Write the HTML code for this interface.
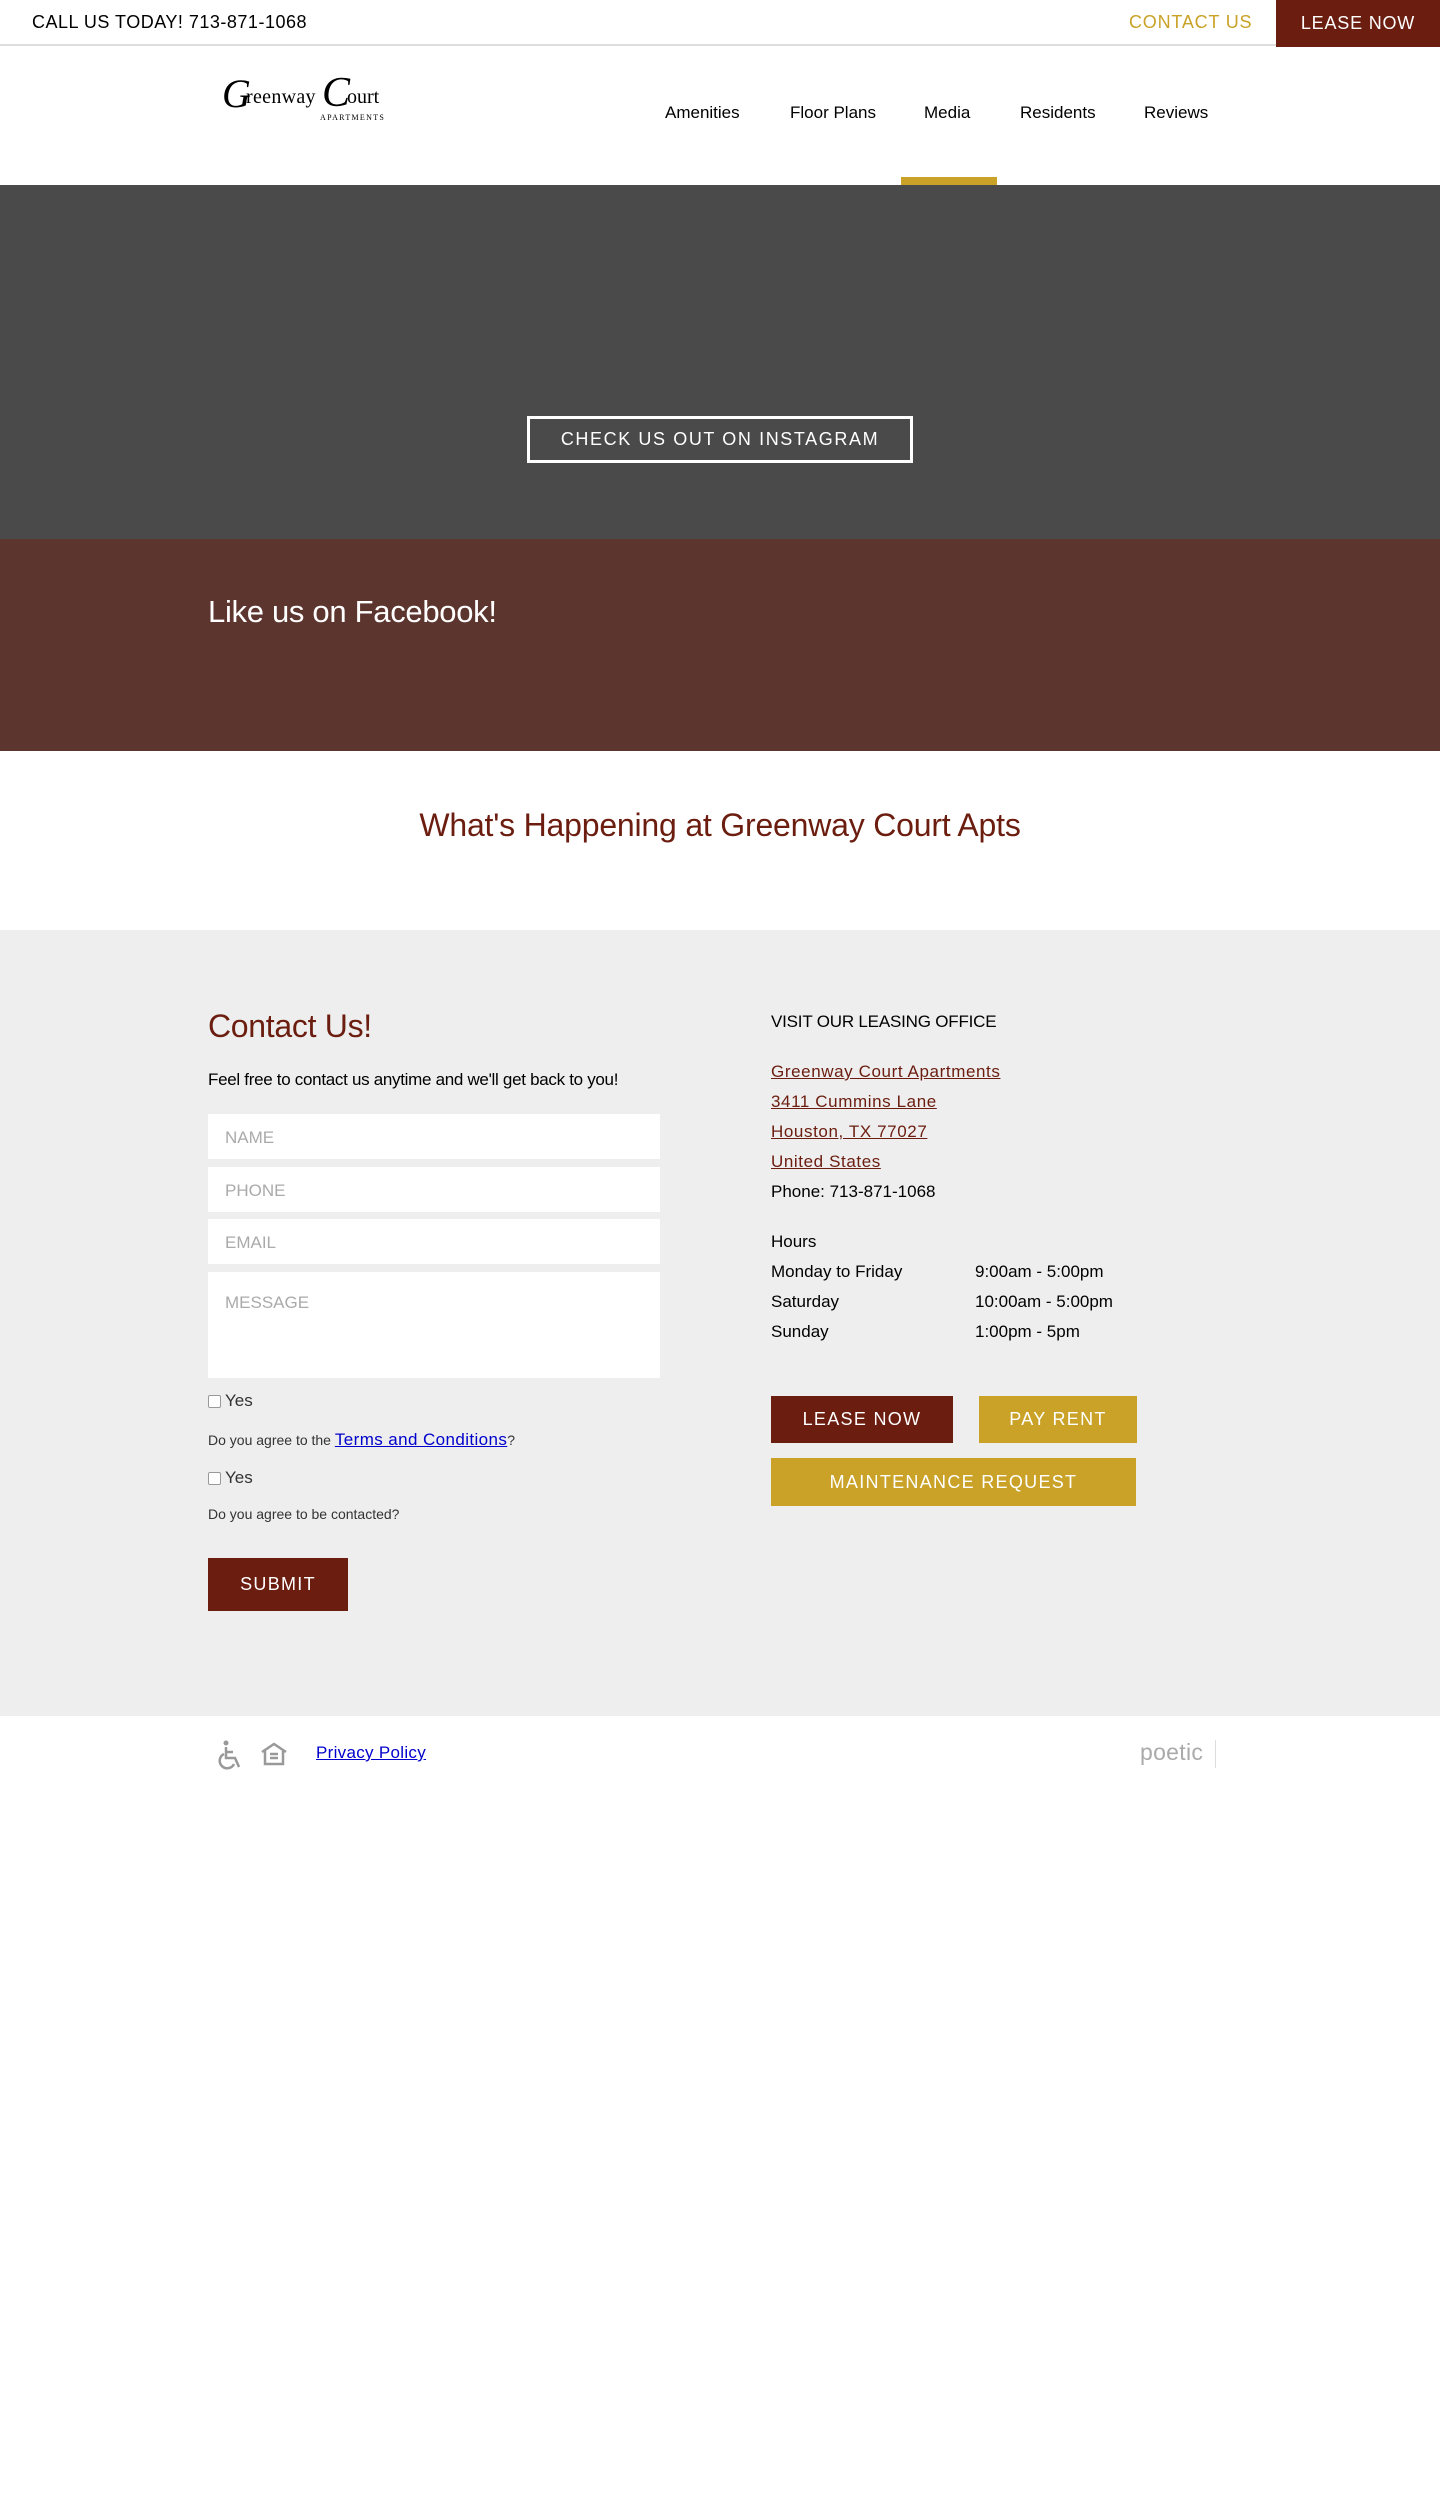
<!DOCTYPE html>
<html><head><meta charset="utf-8"><style>
*{margin:0;padding:0;box-sizing:border-box}
body{width:1440px;height:2500px;background:#fff;font-family:"Liberation Sans",sans-serif;color:#000;position:relative;overflow:hidden}
.a{position:absolute;white-space:nowrap}
.topbar{position:absolute;left:0;top:0;width:1440px;height:46px;border-bottom:2px solid #ddd}
.nav{font-size:17px;top:103px}
.inp{position:absolute;left:208px;width:452px;background:#fff;color:#aaa;font-size:17px;padding-left:17px}
.btn{position:absolute;color:#fff;font-size:18px;letter-spacing:1.3px;display:flex;align-items:center;justify-content:center}
.lk{color:#6b1d0f;text-decoration:underline;font-size:17px;letter-spacing:.6px}
.r{font-size:17px}
</style></head><body>
<div class="topbar"></div>
<div class="a" style="left:32px;top:12px;font-size:18px;letter-spacing:.5px">CALL US TODAY! 713-871-1068</div>
<div class="a" style="left:1129px;top:12px;font-size:18px;color:#c9a227;letter-spacing:.8px">CONTACT US</div>
<div class="a" style="left:1276px;top:0;width:164px;height:47px;background:#6b1d0f;color:#fff;font-size:18px;letter-spacing:.8px;display:flex;align-items:center;justify-content:center">LEASE NOW</div>

<div class="a" style="left:222px;top:74px;font-family:'Liberation Serif',serif;font-style:italic;font-size:40px;line-height:40px">G</div>
<div class="a" style="left:246px;top:86px;font-family:'Liberation Serif',serif;font-size:20px;letter-spacing:.3px">reenway</div>
<div class="a" style="left:322px;top:72px;font-family:'Liberation Serif',serif;font-style:italic;font-size:42px;line-height:42px">C</div>
<div class="a" style="left:347px;top:86px;font-family:'Liberation Serif',serif;font-size:20px">ourt</div>
<div class="a" style="left:320px;top:113px;font-family:'Liberation Serif',serif;font-size:8px;letter-spacing:1.3px">APARTMENTS</div>

<div class="a nav" style="left:665px">Amenities</div>
<div class="a nav" style="left:790px">Floor Plans</div>
<div class="a nav" style="left:924px">Media</div>
<div class="a nav" style="left:1020px">Residents</div>
<div class="a nav" style="left:1144px">Reviews</div>
<div class="a" style="left:901px;top:177px;width:96px;height:8px;background:#c9a227"></div>

<div class="a" style="left:0;top:185px;width:1440px;height:354px;background:#4a4a4a"></div>
<div class="a" style="left:527px;top:416px;width:386px;height:47px;border:3px solid #fff;color:#fff;font-size:18px;letter-spacing:1.6px;display:flex;align-items:center;justify-content:center">CHECK US OUT ON INSTAGRAM</div>

<div class="a" style="left:0;top:539px;width:1440px;height:212px;background:#5c352e"></div>
<div class="a" style="left:208px;top:594px;font-size:31px;color:#fff;letter-spacing:-.3px">Like us on Facebook!</div>

<div class="a" style="left:0;top:807px;width:1440px;text-align:center;font-size:32px;color:#6b1d0f;letter-spacing:-.2px">What's Happening at Greenway Court Apts</div>

<div class="a" style="left:0;top:930px;width:1440px;height:786px;background:#eee"></div>
<div class="a" style="left:208px;top:1008px;font-size:32px;color:#6b1d0f;letter-spacing:-.3px">Contact Us!</div>
<div class="a" style="left:208px;top:1070px;font-size:17px;letter-spacing:-.3px">Feel free to contact us anytime and we'll get back to you!</div>
<div class="inp" style="top:1114px;height:45px;line-height:47px">NAME</div>
<div class="inp" style="top:1167px;height:45px;line-height:47px">PHONE</div>
<div class="inp" style="top:1219px;height:45px;line-height:47px">EMAIL</div>
<div class="inp" style="top:1272px;height:106px;padding-top:21px">MESSAGE</div>
<div class="a" style="left:208px;top:1395px;width:13px;height:13px;border:1px solid #999;border-radius:2px;background:#fff"></div>
<div class="a" style="left:225px;top:1391px;font-size:17px;color:#333">Yes</div>
<div class="a" style="left:208px;top:1430px;font-size:14px;color:#333">Do you agree to the <span style="color:#00c;text-decoration:underline;font-size:17px;letter-spacing:.4px">Terms and Conditions</span>?</div>
<div class="a" style="left:208px;top:1472px;width:13px;height:13px;border:1px solid #999;border-radius:2px;background:#fff"></div>
<div class="a" style="left:225px;top:1468px;font-size:17px;color:#333">Yes</div>
<div class="a" style="left:208px;top:1506px;font-size:14px;color:#333">Do you agree to be contacted?</div>
<div class="btn" style="left:208px;top:1558px;width:140px;height:53px;background:#6b1d0f">SUBMIT</div>

<div class="a" style="left:771px;top:1012px;font-size:17px;letter-spacing:-.2px">VISIT OUR LEASING OFFICE</div>
<div class="a lk" style="left:771px;top:1062px">Greenway Court Apartments</div>
<div class="a lk" style="left:771px;top:1092px">3411 Cummins Lane</div>
<div class="a lk" style="left:771px;top:1122px">Houston, TX 77027</div>
<div class="a lk" style="left:771px;top:1152px">United States</div>
<div class="a r" style="left:771px;top:1182px">Phone: 713-871-1068</div>
<div class="a r" style="left:771px;top:1232px">Hours</div>
<div class="a r" style="left:771px;top:1262px">Monday to Friday</div>
<div class="a r" style="left:975px;top:1262px">9:00am - 5:00pm</div>
<div class="a r" style="left:771px;top:1292px">Saturday</div>
<div class="a r" style="left:975px;top:1292px">10:00am - 5:00pm</div>
<div class="a r" style="left:771px;top:1322px">Sunday</div>
<div class="a r" style="left:975px;top:1322px">1:00pm - 5pm</div>
<div class="btn" style="left:771px;top:1396px;width:182px;height:47px;background:#6b1d0f">LEASE NOW</div>
<div class="btn" style="left:979px;top:1396px;width:158px;height:47px;background:#c9a227">PAY RENT</div>
<div class="btn" style="left:771px;top:1458px;width:365px;height:48px;background:#c9a227">MAINTENANCE REQUEST</div>

<svg class="a" style="left:218px;top:1740px" width="28" height="30" viewBox="0 0 28 30" fill="none" stroke="#999" stroke-width="2.5">
<circle cx="8" cy="3" r="2.5" fill="#999" stroke="none"/><path d="M8 7v11h9l4 9"/><path d="M8 12h7"/><path d="M6 14a7.5 7.5 0 1 0 10 10"/></svg>
<svg class="a" style="left:260px;top:1742px" width="28" height="24" viewBox="0 0 28 24" fill="none" stroke="#999" stroke-width="2.5">
<path d="M2 10L14 2l12 8"/><path d="M5 9v13h18V9"/><path d="M10 12h8M10 16h8"/></svg>
<div class="a" style="left:316px;top:1743px;font-size:17px;color:#00c;text-decoration:underline;letter-spacing:.3px">Privacy Policy</div>
<div class="a" style="left:1140px;top:1739px;font-size:23px;color:#aaa;letter-spacing:.3px">poetic</div>
<div class="a" style="left:1215px;top:1740px;width:1px;height:28px;background:#ddd"></div>
</body></html>
